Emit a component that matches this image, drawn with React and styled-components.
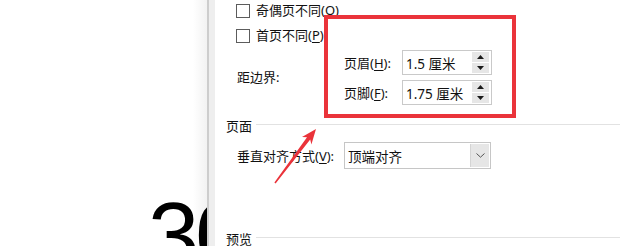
import React from 'react';
import styled, { createGlobalStyle } from 'styled-components';

const GlobalStyle = createGlobalStyle`
  html, body {
    margin: 0;
    padding: 0;
    background: #ffffff;
  }
`;

const uiFont = `"Noto Sans", "Noto Sans CJK SC", sans-serif`;

const Page = styled.div`
  position: relative;
  width: 620px;
  height: 246px;
  display: flex;
  overflow: hidden;
  background: #ffffff;
  font-family: ${uiFont};
  font-size: 13px;
  color: #111111;
`;

const DocPane = styled.div`
  width: 207px;
  height: 246px;
  flex-shrink: 0;
  overflow: hidden;
  background: linear-gradient(to right, #ffffff 0, #ffffff 193px, #f2f2f2 207px);
  padding-top: 189px;
  box-sizing: border-box;
`;

const BigNumber = styled.div`
  font-family: "Liberation Sans", Arial, sans-serif;
  font-size: 92px;
  line-height: 1;
  color: #000000;
  white-space: nowrap;
  padding-left: 148px;
  letter-spacing: -4px;
`;

const Dialog = styled.div`
  flex: 1;
  border-left: 2px solid #cdcdcd;
  box-shadow: inset 6px 0 0 #eeeeee;
  padding-left: 17px;
  display: flex;
  flex-direction: column;
`;

const CheckRow = styled.label`
  height: 22px;
  margin-top: ${p => p.$first ? '0' : '4px'};
  padding-left: 10px;
  display: flex;
  align-items: center;
  gap: 6px;
  line-height: 1;
`;

const CheckBox = styled.span`
  width: 12px;
  height: 12px;
  border: 1px solid #5c5c5c;
  background: #ffffff;
  flex-shrink: 0;
`;

const Key = styled.span`
  text-decoration: underline;
  text-underline-offset: 2px;
`;

const FieldRow = styled.div`
  display: flex;
  align-items: center;
  padding-left: 11px;
  margin-top: ${p => p.$top || 0}px;
`;

const FieldLabel = styled.span`
  width: 107px;
  flex-shrink: 0;
  white-space: nowrap;
  margin-top: ${p => p.$shift || 0}px;
`;

const SpinGrid = styled.div`
  display: grid;
  grid-template-columns: 58px 90px;
  row-gap: 5px;
  align-items: center;
`;

const SpinLabel = styled.span`
  white-space: nowrap;
`;

const SpinBox = styled.div`
  height: 25px;
  box-sizing: border-box;
  border: 1px solid #c9c9c9;
  display: flex;
  align-items: center;
  padding: 0 2px 0 3px;
  background: #ffffff;
`;

const SpinValue = styled.span`
  flex: 1;
  font-size: 13.5px;
`;

const SpinButtons = styled.div`
  width: 17px;
  display: flex;
  flex-direction: column;
  gap: 1px;
`;

const SpinButton = styled.div`
  height: 10px;
  background: #e6e6e6;
  display: flex;
  align-items: center;
  justify-content: center;
  svg { display: block; }
`;

const SectionTitle = styled.div`
  display: flex;
  align-items: center;
  gap: 4px;
  height: 16px;
  margin-top: ${p => p.$top}px;
  white-space: nowrap;
  &::after {
    content: '';
    flex: 1;
    height: 1px;
    background: #e2e2e2;
    margin-top: -1px;
  }
`;

const Select = styled.div`
  width: 147px;
  height: 27px;
  box-sizing: border-box;
  border: 1px solid #c6c6c6;
  display: flex;
  align-items: stretch;
  background: #ffffff;
`;

const SelectValue = styled.span`
  flex: 1;
  display: flex;
  align-items: center;
  padding-left: 3px;
  font-size: 13.5px;
`;

const SelectButton = styled.span`
  width: 18px;
  margin: 1px;
  background: #e6e6e6;
  border-left: 1px solid #d4d4d4;
  display: flex;
  align-items: center;
  justify-content: center;
`;

const Highlight = styled.div`
  position: absolute;
  left: 324px;
  top: 15px;
  width: 192px;
  height: 103px;
  box-sizing: border-box;
  border: 4.5px solid #ea333a;
  pointer-events: none;
`;

const ArrowMark = styled.svg`
  position: absolute;
  left: 0;
  top: 0;
  pointer-events: none;
`;

const Triangle = ({ up }) => (
  <svg width="7" height="4" viewBox="0 0 7 4">
    <path d={up ? 'M0 4 L3.5 0 L7 4 Z' : 'M0 0 L7 0 L3.5 4 Z'} fill="#1a1a1a" />
  </svg>
);

const Spin = ({ value }) => (
  <SpinBox>
    <SpinValue>{value}</SpinValue>
    <SpinButtons>
      <SpinButton><Triangle up /></SpinButton>
      <SpinButton><Triangle /></SpinButton>
    </SpinButtons>
  </SpinBox>
);

export default function App() {
  return (
    <>
      <GlobalStyle />
      <Page>
        <DocPane>
          <BigNumber>30</BigNumber>
        </DocPane>

        <Dialog>
          <CheckRow $first>
            <CheckBox />
            <span>奇偶页不同(<Key>O</Key>)</span>
          </CheckRow>
          <CheckRow>
            <CheckBox />
            <span>首页不同(<Key>P</Key>)</span>
          </CheckRow>

          <FieldRow $top={4}>
            <FieldLabel $shift={-2}>距边界:</FieldLabel>
            <SpinGrid>
              <SpinLabel>页眉(<Key>H</Key>):</SpinLabel>
              <Spin value="1.5 厘米" />
              <SpinLabel>页脚(<Key>F</Key>):</SpinLabel>
              <Spin value="1.75 厘米" />
            </SpinGrid>
          </FieldRow>

          <SectionTitle $top={12}>页面</SectionTitle>

          <FieldRow $top={9}>
            <FieldLabel>垂直对齐方式(<Key>V</Key>):</FieldLabel>
            <Select>
              <SelectValue>顶端对齐</SelectValue>
              <SelectButton>
                <svg width="9" height="5" viewBox="0 0 9 5">
                  <path d="M0.5 0.5 L4.5 4.2 L8.5 0.5" fill="none" stroke="#555" strokeWidth="1" />
                </svg>
              </SelectButton>
            </Select>
          </FieldRow>

          <SectionTitle $top={61}>预览</SectionTitle>
        </Dialog>

        <Highlight />
        <ArrowMark width="620" height="246" viewBox="0 0 620 246">
          <polygon
            points="316,129 311.4,144.5 310.2,139.6 275.6,183.5 274.4,182.5 307,137.2 302,137.1"
            fill="#ea333a"
          />
        </ArrowMark>
      </Page>
    </>
  );
}
